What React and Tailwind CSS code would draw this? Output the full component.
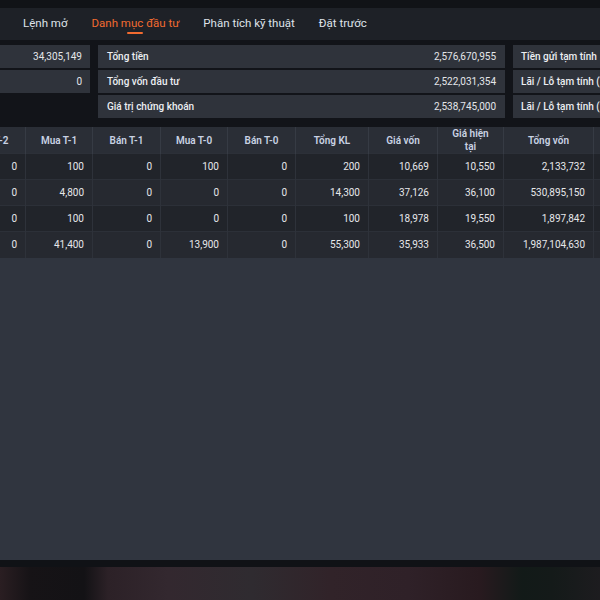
const tabs = ["Lệnh mở", "Danh mục đầu tư", "Phân tích kỹ thuật", "Đặt trước"]

const summary = [
  { left: "34,305,149", label: "Tổng tiền", value: "2,576,670,955", right: "Tiền gửi tạm tính" },
  { left: "0", label: "Tổng vốn đầu tư", value: "2,522,031,354", right: "Lãi / Lỗ tạm tính (VND)" },
  { left: null, label: "Giá trị chứng khoán", value: "2,538,745,000", right: "Lãi / Lỗ tạm tính (%)" },
]

const columns = [
  { title: "Bán T-2", w: "w-[68px]" },
  { title: "Mua T-1", w: "w-[67px]" },
  { title: "Bán T-1", w: "w-[68px]" },
  { title: "Mua T-0", w: "w-[67px]" },
  { title: "Bán T-0", w: "w-[68px]" },
  { title: "Tổng KL", w: "w-[73px]" },
  { title: "Giá vốn", w: "w-[69px]" },
  { title: "Giá hiện tại", w: "w-[66px]" },
  { title: "Tổng vốn", w: "w-[90px]" },
  { title: "Giá trị hiện tại", w: "w-[100px]" },
]

const rows = [
  ["0", "100", "0", "100", "0", "200", "10,669", "10,550", "2,133,732", "2,110,000"],
  ["0", "4,800", "0", "0", "0", "14,300", "37,126", "36,100", "530,895,150", "516,230,000"],
  ["0", "100", "0", "0", "0", "100", "18,978", "19,550", "1,897,842", "1,955,000"],
  ["0", "41,400", "0", "13,900", "0", "55,300", "35,933", "36,500", "1,987,104,630", "2,018,450,000"],
]

function App() {
  return (
    <div
      className="w-[600px] h-[600px] overflow-hidden bg-[#121419] flex flex-col"
      style={{ fontFamily: "Roboto, 'Noto Sans', sans-serif" }}
    >
      {/* Top strip */}
      <div className="h-[8px] bg-[#111317]" />

      {/* Tabs */}
      <div className="h-[32px] bg-[#1e2127] flex items-center pl-[23px] gap-[24px]">
        {tabs.map((t, i) => (
          <div key={t} className="relative h-full flex items-center">
            <span
              className={
                i === 1
                  ? "text-[11.5px] text-[#f26b30] whitespace-nowrap"
                  : "text-[11.5px] text-[#dfe3ea] whitespace-nowrap"
              }
            >
              {t}
            </span>
            {i === 1 && (
              <div className="absolute left-1/2 -translate-x-1/2 bottom-[6px] w-[16px] h-[2px] bg-[#f26b30] rounded-full" />
            )}
          </div>
        ))}
      </div>

      {/* Summary */}
      <div className="pt-[5px] pb-[9px] overflow-hidden">
        <div className="ml-[-110px] grid grid-cols-[200px_407px_200px] gap-x-[8px] gap-y-[2px] text-[10px]">
          {summary.map((r) => (
            <div key={r.label} className="contents">
              {r.left !== null ? (
                <div className="h-[23px] bg-[#2f333b] flex items-center justify-end pr-[8px] text-[#e4e6ea]">
                  {r.left}
                </div>
              ) : (
                <div className="h-[23px]" />
              )}
              <div className="h-[23px] bg-[#2f333b] flex items-center justify-between px-[9px]">
                <span className="font-medium text-[#eceef2]">{r.label}</span>
                <span className="text-[#e4e6ea]">{r.value}</span>
              </div>
              <div className="h-[23px] bg-[#2f333b] flex items-center px-[8px]">
                <span className="font-medium text-[#eceef2] whitespace-nowrap">{r.right}</span>
              </div>
            </div>
          ))}
        </div>
      </div>

      {/* Table */}
      <div className="flex-1 bg-[#30353f] overflow-hidden">
        <table className="ml-[-43px] w-[736px] table-fixed border-collapse text-[10px]">
          <colgroup>
            {columns.map((c) => (
              <col key={c.title} className={c.w} />
            ))}
          </colgroup>
          <thead>
            <tr className="h-[26px] bg-[#2a2e36]">
              {columns.map((c) => (
                <th
                  key={c.title}
                  className="border-x border-[#363b44] font-semibold text-[#c9d2e3] text-center leading-[13px] px-[8px] py-0"
                >
                  {c.title}
                </th>
              ))}
            </tr>
          </thead>
          <tbody>
            {rows.map((r, i) => (
              <tr
                key={i}
                className={
                  i % 2 === 0
                    ? "h-[26px] bg-[#21242a] border-t border-[#2c3038]"
                    : "h-[26px] bg-[#262930] border-t border-[#2c3038]"
                }
              >
                {r.map((v, j) => (
                  <td
                    key={j}
                    className="border-x border-[#2e323a] text-right pr-[8px] text-[#e6e7ea] whitespace-nowrap"
                  >
                    {v}
                  </td>
                ))}
              </tr>
            ))}
          </tbody>
        </table>
      </div>

      {/* Bottom blurred strip */}
      <div className="h-[7px] bg-[#101216]" />
      <div className="h-[33px] bg-[linear-gradient(90deg,#2a1e22_0%,#161316_5%,#131215_14%,#2c2127_18%,#33282f_28%,#2f2b30_42%,#312329_55%,#2f2128_68%,#281a1f_80%,#121a18_87%,#141a19_92%,#1d1c1f_100%)]" />
    </div>
  )
}

export default App
